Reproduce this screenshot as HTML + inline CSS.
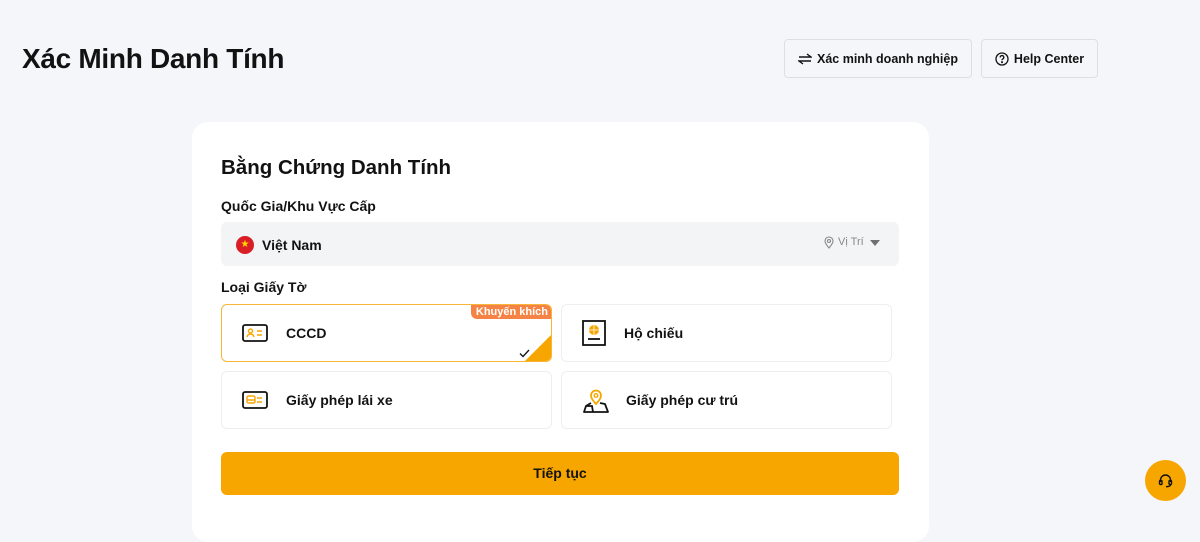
<!DOCTYPE html>
<html><head><meta charset="utf-8"><style>
*{box-sizing:border-box;margin:0;padding:0}
body{width:1200px;height:513px;overflow:hidden;background:#f5f6f9;font-family:"Liberation Sans","DejaVu Sans",sans-serif;color:#121212;position:relative}
.abs{position:absolute}
h1{position:absolute;left:22px;top:43px;font-size:28px;font-weight:600;letter-spacing:-0.3px}
.btn{position:absolute;top:39px;height:39px;border:1px solid #dcdfe4;border-radius:4px;background:#f5f6f9;font-size:12.5px;font-weight:600;display:flex;align-items:center;justify-content:center;gap:5px}
.card{position:absolute;left:192px;top:122px;width:737px;height:420px;background:#fff;border-radius:16px}
.opt{position:absolute;width:331px;height:58px;border:1px solid #eceef1;border-radius:6px;background:#fff;display:flex;align-items:center;font-size:14px;font-weight:600}
.opt svg{margin-left:20px;margin-right:18px}
</style></head><body>
<h1>Xác Minh Danh Tính</h1>
<div class="btn" style="left:784px;width:188px"><svg width="14" height="12" viewBox="0 0 14 12" fill="none" stroke="#121212" stroke-width="1.4"><path d="M1 4h12L9 1M13 8H1l4 3"/></svg>Xác minh doanh nghiệp</div>
<div class="btn" style="left:981px;width:117px"><svg width="14" height="14" viewBox="0 0 14 14" fill="none" stroke="#121212" stroke-width="1.3"><circle cx="7" cy="7" r="6"/><path d="M5.2 5.5a1.8 1.8 0 1 1 2.4 1.6c-.5.2-.6.6-.6 1.1"/><circle cx="7" cy="10.2" r=".4" fill="#121212"/></svg>Help Center</div>
<div class="card"></div>
<div class="abs" style="left:221px;top:156px;font-size:20.5px;font-weight:600">Bằng Chứng Danh Tính</div>
<div class="abs" style="left:221px;top:198px;font-size:14px;font-weight:600">Quốc Gia/Khu Vực Cấp</div>
<div class="abs" style="left:221px;top:222px;width:678px;height:44px;background:#f3f4f6;border-radius:6px"></div>
<div class="abs" style="left:236px;top:236px;width:18px;height:18px;border-radius:50%;background:#da1e26;color:#ffd800;font-size:10px;line-height:18px;text-align:center">★</div>
<div class="abs" style="left:262px;top:237px;font-size:14px;font-weight:600">Việt Nam</div>
<svg class="abs" style="left:824px;top:236px" width="10" height="13" viewBox="0 0 10 13" fill="none" stroke="#888" stroke-width="1.1"><path d="M5 12C2 8.5 1 6.5 1 5a4 4 0 0 1 8 0c0 1.5-1 3.5-4 7z"/><circle cx="5" cy="5" r="1.5"/></svg>
<div class="abs" style="left:838px;top:236px;font-size:11px;color:#888">Vị Trí</div>
<div class="abs" style="left:870px;top:240px;width:0;height:0;border-left:5px solid transparent;border-right:5px solid transparent;border-top:6px solid #707070"></div>
<div class="abs" style="left:221px;top:279px;font-size:14px;font-weight:600">Loại Giấy Tờ</div>

<div class="opt" style="left:221px;top:304px;border:1.5px solid #f7b638;overflow:hidden"><svg width="26" height="18" viewBox="0 0 26 18" fill="none"><rect x="1" y="1" width="24" height="16" rx="2" stroke="#121212" stroke-width="1.8"/><circle cx="8.5" cy="7" r="2" stroke="#f7a600" stroke-width="1.4"/><path d="M5 13c.5-2 2-3 3.5-3s3 1 3.5 3" stroke="#f7a600" stroke-width="1.4"/><path d="M15 7h5M15 11h5" stroke="#f7a600" stroke-width="1.4"/></svg>CCCD
<div class="abs" style="right:0;top:0;background:#f58345;color:#fff;font-size:11px;font-weight:600;padding:0 3px 0 5px;height:14px;line-height:14px;border-bottom-left-radius:6px">Khuyến khích</div>
<div class="abs" style="right:0;bottom:0;width:0;height:0;border-left:26px solid transparent;border-bottom:26px solid #f7a600"></div>
<svg class="abs" style="right:3px;bottom:3px" width="11" height="9" viewBox="0 0 11 9" fill="none" stroke="#121212" stroke-width="1.3"><path d="M1 4.5l3 3L10 1"/></svg>
</div>
<div class="opt" style="left:561px;top:304px"><svg width="24" height="26" viewBox="0 0 24 26" fill="none"><rect x="1" y="1" width="22" height="24" stroke="#121212" stroke-width="1.8"/><circle cx="12" cy="10" r="5" fill="#f7a600"/><path d="M7 10h10M12 5v10" stroke="#fff" stroke-width=".8"/><path d="M6 19h12" stroke="#121212" stroke-width="1.8"/></svg>Hộ chiếu</div>
<div class="opt" style="left:221px;top:371px"><svg width="26" height="18" viewBox="0 0 26 18" fill="none"><rect x="1" y="1" width="24" height="16" rx="2" stroke="#121212" stroke-width="1.8"/><rect x="5" y="5" width="8" height="7" rx="1.5" stroke="#f7a600" stroke-width="1.4"/><path d="M5 9h8M15 7h5M15 11h5" stroke="#f7a600" stroke-width="1.4"/></svg>Giấy phép lái xe</div>
<div class="opt" style="left:561px;top:371px"><svg width="28" height="28" viewBox="0 0 28 28" fill="none" style="margin-right:16px"><path d="M9 17l-5 3-2 6h24l-3-8-5-1" stroke="#121212" stroke-width="1.8" stroke-linejoin="round"/><path d="M4 20h6l1 6" stroke="#121212" stroke-width="1.8"/><path d="M14 18c-3.5-4-5-6-5-8.5a5 5 0 0 1 10 0c0 2.5-1.5 4.5-5 8.5z" fill="#fff" stroke="#f7a600" stroke-width="1.8"/><circle cx="14" cy="9.5" r="1.8" stroke="#f7a600" stroke-width="1.4"/></svg>Giấy phép cư trú</div>

<div class="abs" style="left:221px;top:452px;width:678px;height:43px;background:#f7a600;border-radius:6px;font-size:14px;font-weight:600;text-align:center;line-height:43px">Tiếp tục</div>
<div class="abs" style="left:1145px;top:460px;width:41px;height:41px;border-radius:50%;background:#f7a600"></div>
<svg class="abs" style="left:1158px;top:473px" width="15" height="15" viewBox="0 0 15 15" fill="none" stroke="#121212" stroke-width="1.4"><path d="M2.5 9V7a5 5 0 0 1 10 0v2"/><rect x="1.5" y="7.5" width="2.5" height="4" rx="1"/><rect x="11" y="7.5" width="2.5" height="4" rx="1"/><path d="M12.5 11.5c0 1.5-1.5 2.2-4.5 2.2"/></svg>
</body></html>
